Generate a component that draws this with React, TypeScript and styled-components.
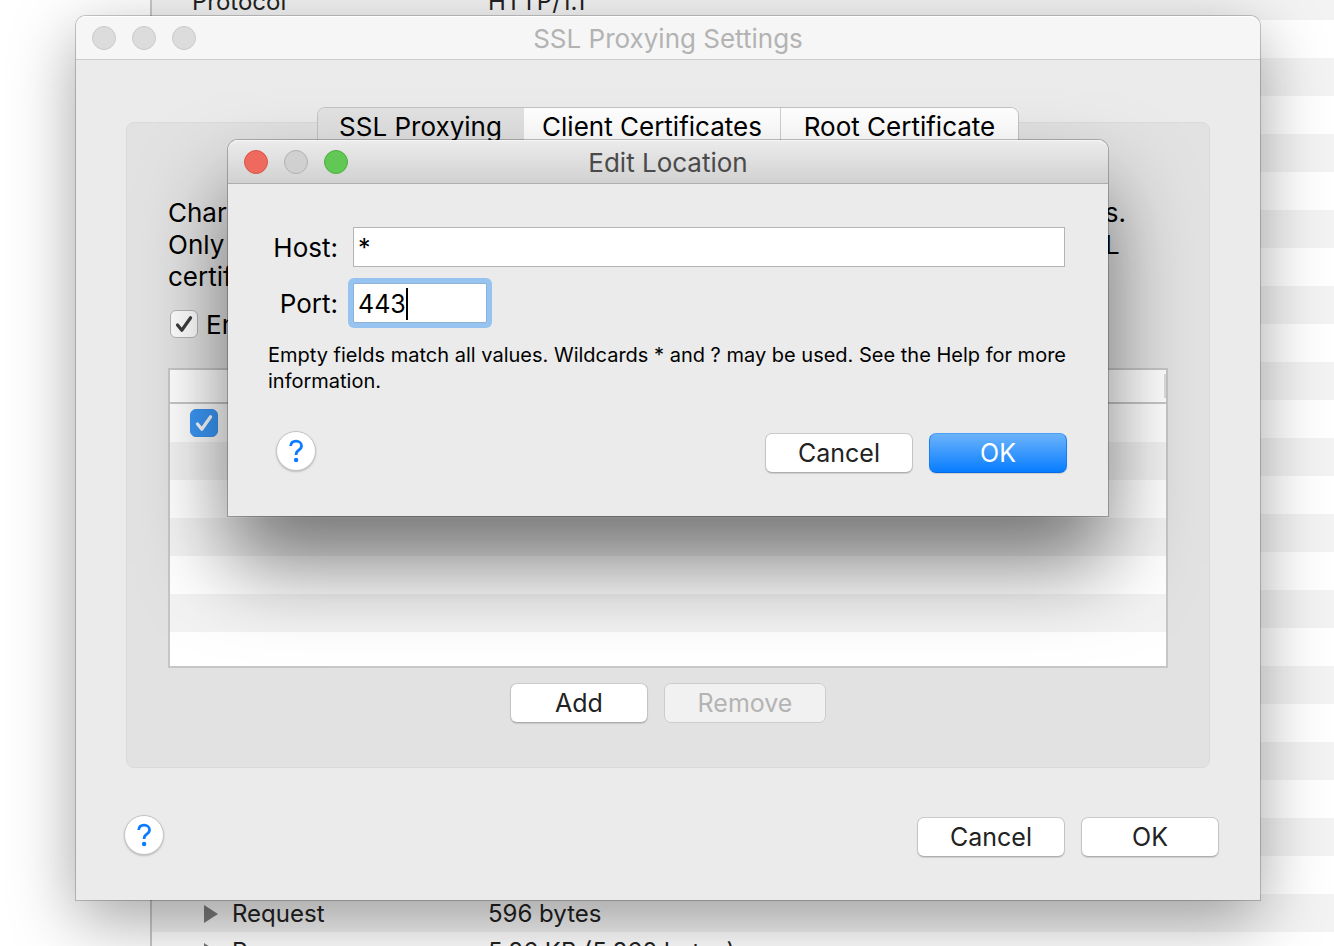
import React from 'react';
import styled, { createGlobalStyle } from 'styled-components';

const Global = createGlobalStyle`
  * { box-sizing: border-box; }
  body { margin: 0; background: #fff; color: #000; font-family: Inter, "Liberation Sans", sans-serif; font-size: 26px; }
  button, input { font: inherit; }
`;

const Desktop = styled.main`
  position: relative;
  height: 100vh;
  overflow: hidden;
`;

const Backdrop = styled.section`
  margin-left: 150px;
  margin-top: -18px;
  border-left: 2px solid #c8c8c8;
`;

const Details = styled.table`
  width: 100%;
  border-collapse: collapse;
  table-layout: fixed;
  font-size: 24px;
  color: #222;
  tr:nth-child(odd) { background: #f3f3f3; }
  td, th { height: 38px; padding: 1px 0 0; font-weight: 400; text-align: left; line-height: 37px; white-space: nowrap; }
  th { width: 336px; padding-left: 40px; }
`;

const Expandable = styled.span`
  display: flex;
  align-items: center;
  gap: 14px;
  padding-left: 12px;
`;

const Window = styled.section`
  position: absolute;
  top: 16px;
  left: 76px;
  right: 74px;
  background: #ebebeb;
  border-radius: 10px 10px 0 0;
  box-shadow: 0 0 0 1px rgba(0, 0, 0, 0.2), 0 20px 66px rgba(0, 0, 0, 0.36);
`;

const Dialog = styled.section`
  position: absolute;
  top: 124px;
  left: 152px;
  right: 152px;
  background: #ebebeb;
  border-radius: 10px 10px 0 0;
  box-shadow: 0 0 0 1px rgba(0, 0, 0, 0.24), 0 48px 84px rgba(0, 0, 0, 0.52);
`;

const TitleBar = styled.header<{ $active?: boolean }>`
  display: grid;
  grid-template-columns: 1fr auto 1fr;
  align-items: center;
  height: 44px;
  padding: 0 16px;
  border-radius: 10px 10px 0 0;
  border-bottom: 1px solid ${p => (p.$active ? '#aeaeae' : '#cbcbcb')};
  background: ${p => (p.$active ? 'linear-gradient(#ececec, #d1d1d1)' : '#f6f6f6')};
  box-shadow: inset 0 1px 0 ${p => (p.$active ? '#f6f6f6' : '#fff')};
  color: ${p => (p.$active ? '#4a4a4a' : '#b3b3b3')};
`;

const Title = styled.h1`
  margin: 0;
  padding-top: 2px;
  font-size: 26px;
  font-weight: 400;
  line-height: 32px;
`;

const Lights = styled.div`
  display: flex;
  gap: 16px;
`;

const Light = styled.button<{ $fill: string; $edge: string }>`
  width: 24px;
  height: 24px;
  padding: 0;
  border-radius: 50%;
  border: 1px solid ${p => p.$edge};
  background: ${p => p.$fill};
`;

const WindowBody = styled.div`
  padding: 47px 50px 41px;
`;

const TabList = styled.div`
  position: relative;
  display: flex;
  width: fit-content;
  margin: 0 auto -25px;
  border: 1px solid #c4c4c4;
  border-radius: 8px;
  overflow: hidden;
`;

const Tab = styled.button<{ $selected?: boolean; $width: number }>`
  width: ${p => p.$width}px;
  height: 38px;
  padding: 0 0 2px;
  border: 0;
  border-right: 1px solid ${p => (p.$selected ? '#e2e2e2' : '#d0d0d0')};
  background: ${p => (p.$selected ? '#e2e2e2' : '#fff')};
  color: #000;
  white-space: nowrap;
  &:last-child { border-right: 0; }
`;

const Panel = styled.div`
  padding: 74px 41px 44px;
  border: 1px solid #dadada;
  border-radius: 8px;
  background: #e2e2e2;
`;

const Description = styled.p`
  margin: 0;
  line-height: 32px;
  white-space: nowrap;
`;

const CheckLabel = styled.label`
  display: flex;
  align-items: center;
  gap: 8px;
  height: 32px;
  margin-top: 15px;
  padding-left: 2px;
`;

const CheckWrap = styled.span`
  display: grid;
  width: 28px;
  height: 28px;
  > * { grid-area: 1 / 1; }
  svg { pointer-events: none; }
`;

const CheckInput = styled.input<{ $blue?: boolean }>`
  appearance: none;
  width: 28px;
  height: 28px;
  margin: 0;
  border-radius: 6px;
  border: 1px solid ${p => (p.$blue ? '#3b93f0' : '#b4b4b4')};
  background: ${p => (p.$blue ? '#3b99fa' : '#fff')};
`;

const Locations = styled.table`
  width: 100%;
  margin-top: 28px;
  border: 2px solid #c6c6c6;
  border-collapse: separate;
  border-spacing: 0;
  background: #fff;
  th { height: 34px; padding: 0; border-bottom: 2px solid #c6c6c6; background: #fff; }
  td { height: 38px; padding: 0 20px; }
  tbody tr:nth-child(even) { background: #f3f3f3; }
  tbody tr:last-child td { height: 34px; }
`;

const HeaderEnd = styled.span`
  display: block;
  height: 24px;
  border-right: 2px solid #dcdcdc;
`;

const Actions = styled.div<{ $justify?: string }>`
  display: flex;
  align-items: center;
  justify-content: ${p => p.$justify ?? 'flex-start'};
  gap: 16px;
  font-size: 25px;
`;

const PushButton = styled.button<{ $wide?: number; $primary?: boolean }>`
  width: ${p => p.$wide ?? 138}px;
  height: 40px;
  padding: 0;
  border-radius: 7px;
  border: 1px solid ${p => (p.$primary ? '#1a7df5' : '#c4c4c4')};
  border-top-color: ${p => (p.$primary ? '#4a9ff8' : '#cbcbcb')};
  border-bottom-color: ${p => (p.$primary ? '#0669e6' : '#adadad')};
  background: ${p => (p.$primary ? 'linear-gradient(#6cb3fa, #077dff)' : '#fff')};
  box-shadow: 0 1px 1px rgba(0, 0, 0, 0.12);
  color: ${p => (p.$primary ? '#fff' : '#222')};
  &:disabled { background: #f1f1f1; border-color: #cdcdcd; color: #b4b4b4; box-shadow: none; }
`;

const HelpButton = styled.button`
  width: 40px;
  height: 40px;
  margin: 0 auto 4px 0;
  padding: 0;
  display: grid;
  place-items: center;
  border-radius: 50%;
  border: 1px solid #c4c4c4;
  background: #fff;
  box-shadow: 0 1px 2px rgba(0, 0, 0, 0.2);
`;

const TableActions = styled(Actions)`
  margin-top: 15px;
`;

const WindowFooter = styled(Actions)`
  margin: 47px -9px 0 -2px;
`;

const DialogBody = styled.form`
  padding: 43px 41px 41px 40px;
`;

const Fields = styled.div`
  display: grid;
  grid-template-columns: 70px 1fr;
  column-gap: 15px;
  row-gap: 16px;
  align-items: baseline;
  padding-right: 2px;
  label { text-align: right; white-space: nowrap; }
`;

const TextField = styled.input`
  display: block;
  width: 100%;
  height: 40px;
  padding: 2px 4px 0;
  border: 1px solid #b4b4b4;
  border-radius: 0;
  background: #fff;
  font-size: 25px;
  outline: 0;
`;

const FocusBox = styled.div`
  position: relative;
  width: 134px;
  ${TextField} { border-color: #8fb2d8; box-shadow: 0 0 0 5px #96c3f0; border-radius: 2px; }
`;

const Caret = styled.span`
  position: absolute;
  top: 5px;
  left: 53px;
  width: 2px;
  height: 32px;
  background: #000;
`;

const Note = styled.p`
  margin: 19px 0 0;
  font-size: 20px;
  line-height: 26px;
`;

const DialogFooter = styled(Actions)`
  margin-top: 37px;
  padding-left: 8px;
`;

const Check = ({ color }: { color: string }) => (
  <svg width="28" height="28" viewBox="0 0 28 28" aria-hidden="true">
    <path d="M7.5 15 L11.8 20.2 L20.6 7.8" fill="none" stroke={color} strokeWidth="3.2" strokeLinecap="round" strokeLinejoin="round" />
  </svg>
);

const Question = () => (
  <svg width="20" height="26" viewBox="0 0 20 26" aria-hidden="true">
    <path d="M4.7 8 C4.9 4.8 7 3.2 10.1 3.2 C13.2 3.2 15.5 5 15.5 7.8 C15.5 10 14.4 11.2 12.5 12.4 C10.7 13.5 10.1 14.4 10.1 16.9" fill="none" stroke="#0a7cff" strokeWidth="2.7" strokeLinecap="butt" />
    <circle cx="10.1" cy="22" r="2.2" fill="#0a7cff" />
  </svg>
);

const Triangle = () => (
  <svg width="14" height="18" viewBox="0 0 14 18" aria-hidden="true">
    <path d="M0 0 L14 9 L0 18 Z" fill="#7b7b7b" />
  </svg>
);

const gray = { $fill: '#dcdcdc', $edge: '#cbcbcb' };

export default function App() {
  return (
    <Desktop>
      <Global />
      <Backdrop>
        <Details>
          <tbody>
            <tr><th scope="row">Protocol</th><td>HTTP/1.1</td></tr>
            {Array.from({ length: 23 }, (_, i) => <tr key={i}><th /><td /></tr>)}
            <tr><th scope="row"><Expandable><Triangle />Request</Expandable></th><td>596 bytes</td></tr>
            <tr><th scope="row"><Expandable><Triangle />Response</Expandable></th><td>5.86 KB (5,860 bytes)</td></tr>
          </tbody>
        </Details>
      </Backdrop>

      <Window aria-label="SSL Proxying Settings">
        <TitleBar>
          <Lights>
            <Light {...gray} aria-label="Close" />
            <Light {...gray} aria-label="Minimise" />
            <Light {...gray} aria-label="Zoom" />
          </Lights>
          <Title>SSL Proxying Settings</Title>
        </TitleBar>
        <WindowBody>
          <TabList role="tablist">
            <Tab role="tab" $selected $width={206}>SSL Proxying</Tab>
            <Tab role="tab" $width={257}>Client Certificates</Tab>
            <Tab role="tab" $width={237}>Root Certificate</Tab>
          </TabList>
          <Panel>
            <Description>
              Charles can show you the plain text contents for SSL requests and responses.<br />
              Only the sites matching the locations listed below will be proxied. A site's SSL<br />
              certificate is replaced with one signed by Charles.
            </Description>
            <CheckLabel>
              <CheckWrap><CheckInput type="checkbox" defaultChecked /><Check color="#3c3c3c" /></CheckWrap>
              Enable SSL Proxying
            </CheckLabel>
            <Locations>
              <thead><tr><th><HeaderEnd /></th></tr></thead>
              <tbody>
                <tr><td><CheckWrap><CheckInput $blue type="checkbox" defaultChecked aria-label="Location enabled" /><Check color="#fff" /></CheckWrap></td></tr>
                {Array.from({ length: 6 }, (_, i) => <tr key={i}><td /></tr>)}
              </tbody>
            </Locations>
            <TableActions $justify="center">
              <PushButton>Add</PushButton>
              <PushButton $wide={162} disabled>Remove</PushButton>
            </TableActions>
          </Panel>
          <WindowFooter>
            <HelpButton aria-label="Help"><Question /></HelpButton>
            <PushButton $wide={148}>Cancel</PushButton>
            <PushButton>OK</PushButton>
          </WindowFooter>
        </WindowBody>

        <Dialog role="dialog" aria-label="Edit Location">
          <TitleBar $active>
            <Lights>
              <Light $fill="#ee6a5f" $edge="#d8554a" aria-label="Close" />
              <Light $fill="#d0d0d0" $edge="#b2b2b2" aria-label="Minimise" />
              <Light $fill="#62c855" $edge="#4fae40" aria-label="Zoom" />
            </Lights>
            <Title>Edit Location</Title>
          </TitleBar>
          <DialogBody onSubmit={e => e.preventDefault()}>
            <Fields>
              <label htmlFor="host">Host:</label>
              <TextField id="host" defaultValue="*" />
              <label htmlFor="port">Port:</label>
              <FocusBox><TextField id="port" defaultValue="443" /><Caret /></FocusBox>
            </Fields>
            <Note>Empty fields match all values. Wildcards * and ? may be used. See the Help for more information.</Note>
            <DialogFooter>
              <HelpButton type="button" aria-label="Help"><Question /></HelpButton>
              <PushButton type="button" $wide={148}>Cancel</PushButton>
              <PushButton $primary>OK</PushButton>
            </DialogFooter>
          </DialogBody>
        </Dialog>
      </Window>
    </Desktop>
  );
}
